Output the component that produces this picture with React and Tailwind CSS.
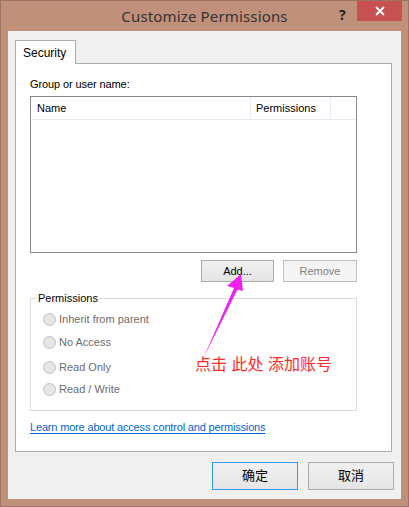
import React from "react";

const ui = { fontFamily: '"Liberation Sans", "Noto Sans CJK SC", sans-serif' };

function Radio({ label, mt }) {
  return (
    <div className={`flex items-center h-[16px] ${mt}`}>
      <span className="w-[13px] h-[13px] rounded-full border border-[#c2c2c2] bg-[#e6e6e6] shrink-0" />
      <span className="ml-[3px] text-[#6d6d6d] leading-none">{label}</span>
    </div>
  );
}

export default function App() {
  return (
    <div
      className="relative w-[409px] h-[507px] bg-[#c1907b] border border-[#9c7462] flex flex-col overflow-hidden text-[11px] text-black"
      style={ui}
    >
      {/* Title bar */}
      <div className="relative h-[30px] shrink-0 flex items-center justify-center">
        <span
          className="text-[15px] text-[#333333] mt-[1px] tracking-[0.15px]"
          style={{ fontFamily: '"Noto Sans", sans-serif' }}
        >
          Customize Permissions
        </span>
        <span
          className="absolute left-[338px] top-[3px] text-[14px] font-bold text-[#222]"
          style={{ fontFamily: '"Noto Sans", sans-serif' }}
        >
          ?
        </span>
        <div className="absolute left-[356px] top-0 w-[45px] h-[20px] bg-[#c75050] flex items-center justify-center">
          <svg width="10" height="10" viewBox="0 0 10 10">
            <path d="M1 1 L9 9 M9 1 L1 9" stroke="#fff" strokeWidth="1.8" />
          </svg>
        </div>
      </div>

      {/* Client */}
      <div className="flex-1 mx-[7px] mb-[7px] bg-[#f0f0f0] flex flex-col">
        {/* Tab */}
        <div className="ml-[7px] mt-[9px] flex">
          <div className="relative z-10 w-[61px] h-[24px] bg-white border border-b-0 border-[#acacac] flex items-center pl-[7px] text-[12px]">
            Security
          </div>
        </div>
        {/* Panel */}
        <div className="ml-[7px] -mt-[1px] w-[377px] h-[389px] bg-white border border-[#acacac] pl-[14px] flex flex-col">
          <div className="mt-[12px] h-[16px] leading-[16px] tracking-[-0.1px]">Group or user name:</div>
          {/* List */}
          <div className="mt-[4px] w-[327px] h-[157px] border border-[#828790] bg-white">
            <div className="flex h-[23px] border-b border-[#e5ecf3]">
              <div className="w-[220px] border-r border-[#e5ecf3] pl-[6px] flex items-center">Name</div>
              <div className="w-[80px] border-r border-[#e5ecf3] pl-[5px] flex items-center">Permissions</div>
              <div className="flex-1" />
            </div>
          </div>
          {/* Buttons */}
          <div className="mt-[7px] flex w-[327px] justify-end gap-[9px]">
            <div className="w-[73px] h-[22px] border border-[#acacac] bg-gradient-to-b from-[#f0f0f0] to-[#e5e5e5] flex items-center justify-center">
              Add...
            </div>
            <div className="w-[74px] h-[22px] border border-[#bfbfbf] bg-[#f4f4f4] text-[#838383] flex items-center justify-center">
              Remove
            </div>
          </div>
          {/* Group box */}
          <div className="relative mt-[16px] w-[327px] h-[113px] border border-[#dcdcdc] pl-[12px] pt-[12px] flex flex-col">
            <span className="absolute left-[6px] -top-[9px] bg-white px-[1px] leading-[16px]">Permissions</span>
            <Radio label="Inherit from parent" mt="mt-0" />
            <Radio label="No Access" mt="mt-[7px]" />
            <Radio label="Read Only" mt="mt-[9px]" />
            <Radio label="Read / Write" mt="mt-[6px]" />
          </div>
          <div className="mt-[8px] leading-[16px]">
            <span className="text-[#0066cc] underline underline-offset-[2px] tracking-[-0.17px]">
              Learn more about access control and permissions
            </span>
          </div>
        </div>
        {/* Bottom buttons */}
        <div className="mt-[10px] mr-[7px] flex justify-end gap-[10px]">
          <div className="w-[86px] h-[28px] border border-[#3399ff] bg-gradient-to-b from-[#f0f0f0] to-[#e5e5e5] flex items-center justify-center text-[13px]">
            确定
          </div>
          <div className="w-[86px] h-[28px] border border-[#acacac] bg-gradient-to-b from-[#f0f0f0] to-[#e5e5e5] flex items-center justify-center text-[13px]">
            取消
          </div>
        </div>
      </div>

      {/* Annotation overlay */}
      <span className="absolute left-[194px] top-[354px] text-[16px] leading-[20px] text-[#ff2a2a] whitespace-nowrap">
        点击 此处 添加账号
      </span>
      <svg className="absolute left-0 top-0 pointer-events-none" width="409" height="507" viewBox="0 0 409 507">
        <path d="M240 273 L226 285 L233 287 L202 358 L236.5 288.5 L242 290 Z" fill="#f020f0" />
      </svg>
    </div>
  );
}
